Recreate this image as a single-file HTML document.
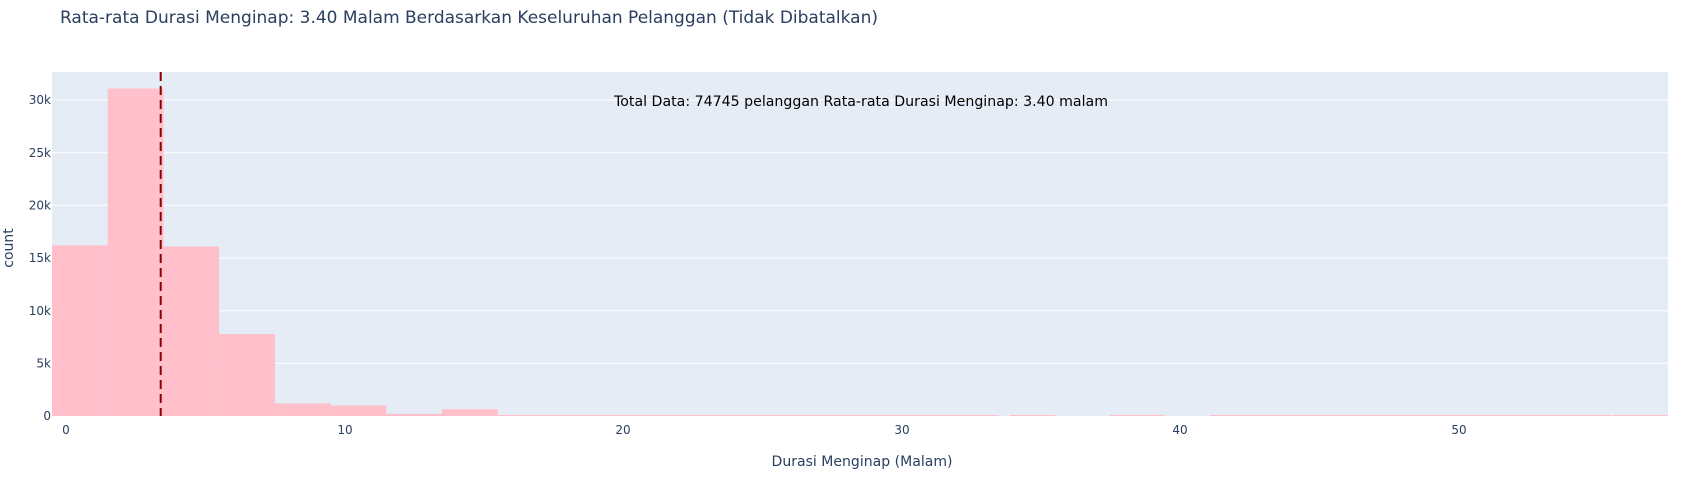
<!DOCTYPE html>
<html><head><meta charset="utf-8"><style>
html,body{margin:0;padding:0;background:#fff;width:1703px;height:482px;overflow:hidden}
svg text{font-family:"DejaVu Sans","Liberation Sans",sans-serif}
</style></head><body>
<svg width="1703" height="482" viewBox="0 0 1703 482" xmlns="http://www.w3.org/2000/svg">
<rect x="52" y="72" width="1616" height="344" fill="#e5ecf6"/>
<g stroke="#fff" stroke-width="1">
<line x1="52" x2="1668" y1="363.3" y2="363.3"/>
<line x1="52" x2="1668" y1="310.7" y2="310.7"/>
<line x1="52" x2="1668" y1="258" y2="258"/>
<line x1="52" x2="1668" y1="205.3" y2="205.3"/>
<line x1="52" x2="1668" y1="152.7" y2="152.7"/>
<line x1="52" x2="1668" y1="100" y2="100"/>
</g>
<g fill="#ffc0cb">
<rect x="52" y="245.4" width="55.7" height="170.6"/>
<rect x="107.7" y="88.5" width="55.8" height="327.5"/>
<rect x="163.4" y="246.5" width="55.7" height="169.5"/>
<rect x="219.1" y="334" width="55.8" height="82"/>
<rect x="274.9" y="403.4" width="55.7" height="12.6"/>
<rect x="330.6" y="405.5" width="55.7" height="10.5"/>
<rect x="386.3" y="413.9" width="55.7" height="2.1"/>
<rect x="442" y="409.2" width="55.8" height="6.8"/>
<rect x="497.8" y="415" width="445" height="1"/>
<rect x="943" y="415" width="55.7" height="1"/>
<rect x="1010" y="415" width="45" height="1"/>
<rect x="1110" y="415" width="55" height="1"/>
<rect x="1210" y="415" width="400" height="1"/>
<rect x="1612" y="415" width="56" height="1"/>
</g>
<line x1="160.7" x2="160.7" y1="72" y2="416" stroke="#8b0000" stroke-width="2" stroke-dasharray="9,5"/>
<text x="60" y="23" font-size="17" fill="#2a3f5f" textLength="818" lengthAdjust="spacingAndGlyphs">Rata-rata Durasi Menginap: 3.40 Malam Berdasarkan Keseluruhan Pelanggan (Tidak Dibatalkan)</text>
<text x="614" y="106" font-size="14" fill="#000" textLength="494" lengthAdjust="spacingAndGlyphs">Total Data: 74745 pelanggan Rata-rata Durasi Menginap: 3.40 malam</text>
<g font-size="12" fill="#2a3f5f" text-anchor="end">
<text x="51" y="420">0</text>
<text x="51" y="367.5">5k</text>
<text x="51" y="315">10k</text>
<text x="51" y="262">15k</text>
<text x="51" y="209.5">20k</text>
<text x="51" y="157">25k</text>
<text x="51" y="104">30k</text>
</g>
<g font-size="12" fill="#2a3f5f" text-anchor="middle">
<text x="66" y="434">0</text>
<text x="345" y="434">10</text>
<text x="623" y="434">20</text>
<text x="902" y="434">30</text>
<text x="1180" y="434">40</text>
<text x="1459" y="434">50</text>
</g>
<text x="862" y="466" font-size="14" fill="#2a3f5f" text-anchor="middle" textLength="181" lengthAdjust="spacingAndGlyphs">Durasi Menginap (Malam)</text>
<text transform="translate(13,248) rotate(-90)" font-size="14" fill="#2a3f5f" text-anchor="middle">count</text>
</svg>
</body></html>
